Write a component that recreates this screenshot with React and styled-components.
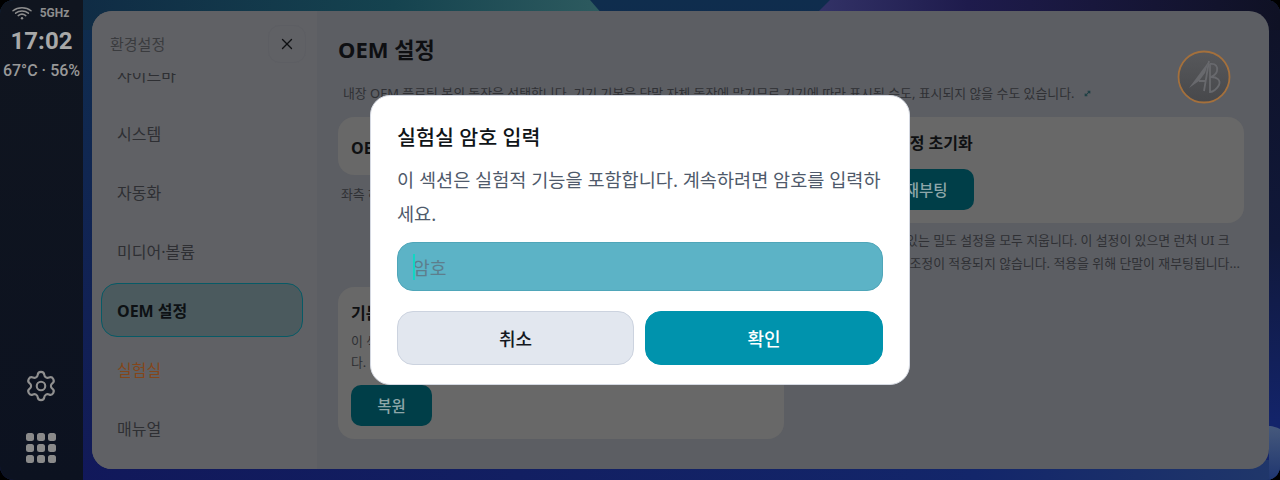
import React from "react";
import styled, { createGlobalStyle } from "styled-components";
import { Settings, X } from "lucide-react";

const Global = createGlobalStyle`
  html, body { margin: 0; padding: 0; background: #000; }
  * { box-sizing: border-box; }
  body { font-family: "Noto Sans", "Noto Sans CJK KR", sans-serif; overflow: hidden; }
`;

const Screen = styled.div`
  position: relative;
  width: 1280px;
  height: 480px;
  display: flex;
  overflow: hidden;
  border-radius: 14px;
  background: #0d1830;
`;

const Wallpaper = styled.svg`
  position: absolute;
  inset: 0;
`;

const Rail = styled.aside`
  position: relative;
  width: 83px;
  flex: none;
  display: flex;
  flex-direction: column;
  align-items: center;
  background: linear-gradient(180deg, #10151f 0%, #0c1220 100%);
  color: #a6a6a6;
`;

const StatusRow = styled.div`
  display: flex;
  align-items: center;
  gap: 8px;
  height: 14px;
  margin-top: 6px;
  margin-right: 2px;
  font: 700 12px/14px Roboto, sans-serif;
  color: #8d8d8d;
`;

const Clock = styled.div`
  font: 700 24px/28px Roboto, sans-serif;
  margin-top: 7px;
  color: #a8a8a8;
`;

const Temp = styled.div`
  font: 500 16px/18px Roboto, sans-serif;
  margin-top: 7px;
  white-space: nowrap;
  color: #989898;
`;

const RailBottom = styled.div`
  margin-top: auto;
  margin-bottom: 17px;
  margin-right: 1px;
  display: flex;
  flex-direction: column;
  align-items: center;
  gap: 30px;
  color: #8f8f8f;
`;

const Dots = styled.div`
  display: grid;
  grid-template-columns: repeat(3, 8px);
  grid-auto-rows: 8px;
  gap: 3px;
`;

const Dot = styled.span`
  border-radius: 2.5px;
  background: #8a8a8a;
`;

const Main = styled.main`
  position: relative;
  flex: 1;
  padding: 11px 11px 11px 9px;
  display: flex;
`;

const Panel = styled.div`
  flex: 1;
  display: flex;
  border-radius: 20px;
  overflow: hidden;
  background: #5c5e63;
`;

const Sidebar = styled.nav`
  width: 225px;
  flex: none;
  display: flex;
  flex-direction: column;
  background: #606165;
`;

const SideHead = styled.div`
  height: 62px;
  flex: none;
  display: flex;
  align-items: center;
  justify-content: space-between;
  padding: 3px 11px 0 18px;
  font-size: 15px;
  color: #3a3b3e;
`;

const CloseBtn = styled.button`
  width: 38px;
  height: 38px;
  display: flex;
  align-items: center;
  justify-content: center;
  border: 1px solid #5d5e63;
  border-radius: 12px;
  background: transparent;
  color: #0f1013;
  padding: 0;
`;

const SideScroll = styled.div`
  flex: 1;
  overflow: hidden;
  padding: 0 14px 0 9px;
`;

const SideList = styled.div`
  display: flex;
  flex-direction: column;
  gap: 5px;
  margin-top: -26px;
`;

const SideItem = styled.div`
  height: 54px;
  flex: none;
  display: flex;
  align-items: center;
  padding: 0 15px;
  font-size: 16px;
  font-weight: ${(p) => (p.$active ? 700 : 400)};
  color: ${(p) => (p.$active ? "#0d1114" : p.$warn ? "#84461a" : "#2e2f33")};
  border-radius: 16px;
  border: 1px solid ${(p) => (p.$active ? "#075a66" : "transparent")};
  background: ${(p) => (p.$active ? "#4b5a5e" : "transparent")};
`;

const Content = styled.section`
  flex: 1;
  min-width: 0;
  padding: 0 25px 0 21px;
  display: flex;
  flex-direction: column;
`;

const HeadRow = styled.div`
  position: relative;
  height: 106px;
  flex: none;
`;

const PageTitle = styled.h1`
  margin: 0;
  padding-top: 23px;
  font-size: 22px;
  line-height: 30px;
  font-weight: 700;
  color: #0e0f12;
`;

const PageDesc = styled.p`
  margin: 0;
  padding: 19px 0 0 5px;
  font-size: 12.9px;
  line-height: 20px;
  color: #2f3034;
  white-space: nowrap;
  display: flex;
  align-items: center;
  gap: 9px;
`;

const Logo = styled.svg`
  position: absolute;
  top: 39px;
  right: 13px;
`;

const Columns = styled.div`
  display: grid;
  grid-template-columns: 446px 443px;
  column-gap: 17px;
  align-items: start;
`;

const Column = styled.div`
  display: flex;
  flex-direction: column;
`;

const Card = styled.div`
  border-radius: 16px;
  background: #686868;
  padding: ${(p) => p.$pad || "13px"};
  height: ${(p) => p.$h}px;
`;

const CardTitle = styled.h2`
  margin: 0;
  font-size: 16px;
  line-height: 26px;
  font-weight: 700;
  color: #0f1012;
  white-space: nowrap;
`;

const CardText = styled.p`
  margin: ${(p) => p.$m || "0"};
  font-size: 12.9px;
  line-height: ${(p) => p.$lh || 23}px;
  color: #2f3034;
  white-space: nowrap;
`;

const Spacer = styled.div`
  height: ${(p) => p.$h}px;
`;

const SolidBtn = styled.div`
  display: inline-flex;
  align-items: center;
  justify-content: center;
  height: 41px;
  width: ${(p) => p.$w}px;
  margin-top: ${(p) => p.$mt || 0}px;
  border-radius: 10px;
  background: #003e48;
  color: #8ea6a9;
  font-size: 15.5px;
  font-weight: 500;
`;

const Backdrop = styled.div`
  position: absolute;
  inset: 0;
  display: flex;
  align-items: flex-start;
  justify-content: center;
  padding-top: 95px;
`;

const Dialog = styled.div`
  width: 540px;
  height: 290px;
  background: #fff;
  border-radius: 20px;
  border: 1px solid #d5d9e2;
  padding: 26px 26px 19px;
  display: flex;
  flex-direction: column;
`;

const DialogTitle = styled.h3`
  margin: 0;
  font-size: 20.6px;
  line-height: 30px;
  font-weight: 500;
  color: #101418;
`;

const DialogText = styled.p`
  margin: 11px 0 0;
  font-size: 18.6px;
  line-height: 34px;
  color: #4f5a6b;
`;

const Field = styled.div`
  position: relative;
  height: 49px;
  margin-top: 11px;
  display: flex;
  align-items: center;
  padding: 0 15px;
  border-radius: 16px;
  border: 1px solid #4fa6b9;
  background: #5cb3c6;
  font-size: 18.2px;
  color: #5d7e8d;
`;

const Caret = styled.span`
  position: absolute;
  left: 15px;
  top: 11px;
  width: 2px;
  height: 26px;
  background: #11d6c4;
`;

const Actions = styled.div`
  display: grid;
  grid-template-columns: 237px 238px;
  gap: 11px;
  margin-top: 20px;
`;

const ActionBtn = styled.div`
  height: 54px;
  display: flex;
  align-items: center;
  justify-content: center;
  border-radius: 16px;
  font-size: 18px;
  font-weight: 500;
  color: ${(p) => (p.$primary ? "#ffffff" : "#14181f")};
  background: ${(p) => (p.$primary ? "#0093ad" : "#e2e7ef")};
  border: 1px solid ${(p) => (p.$primary ? "#0093ad" : "#ccd3df")};
`;

const WifiIcon = () => (
  <svg width="20" height="14" viewBox="0 0 20 14" fill="none" stroke="#8d8d8d" strokeWidth="1.5" strokeLinecap="round">
    <path d="M1 4.8C6 .6 14 .6 19 4.8" />
    <path d="M3.6 7.2C7.3 4.2 12.7 4.2 16.4 7.2" />
    <path d="M6.2 9.6C8.4 7.9 11.6 7.9 13.8 9.6" />
    <circle cx="10" cy="12.2" r="1.2" fill="#8d8d8d" stroke="none" />
  </svg>
);

const LinkGlyph = () => (
  <svg width="7" height="7" viewBox="0 0 9 9" fill="none" stroke="#1d3f44" strokeWidth="1.3">
    <path d="M1.5 7.5L7.5 1.5M4.6 1.5h2.9v2.9M1.5 4.6v2.9h2.9" />
  </svg>
);

const App = () => (
  <>
    <Global />
    <Screen>
      <Wallpaper width="1280" height="480" viewBox="0 0 1280 480">
        <defs>
          <linearGradient id="base" x1="0" y1="0" x2="0" y2="1">
            <stop offset="0" stopColor="#0f2d4d" />
            <stop offset="1" stopColor="#121a58" />
          </linearGradient>
          <linearGradient id="teal" x1="0" y1="0" x2="1" y2="0">
            <stop offset="0" stopColor="#0f2a44" />
            <stop offset="0.6" stopColor="#15434f" />
            <stop offset="1" stopColor="#2f5c60" />
          </linearGradient>
          <linearGradient id="purple" x1="0" y1="0" x2="1" y2="0">
            <stop offset="0" stopColor="#35356a" />
            <stop offset="0.35" stopColor="#1e1b4c" />
            <stop offset="1" stopColor="#0f1124" />
          </linearGradient>
          <linearGradient id="right" x1="0" y1="0" x2="0" y2="1">
            <stop offset="0" stopColor="#0f1226" />
            <stop offset="0.5" stopColor="#10183a" />
            <stop offset="0.88" stopColor="#13246a" />
          </linearGradient>
          <linearGradient id="floor" x1="0" y1="0" x2="1" y2="0">
            <stop offset="0" stopColor="#11185a" />
            <stop offset="0.75" stopColor="#13266a" />
            <stop offset="1" stopColor="#20376a" />
          </linearGradient>
          <linearGradient id="bump" x1="0" y1="0" x2="0" y2="1">
            <stop offset="0" stopColor="#46597c" />
            <stop offset="1" stopColor="#1f3670" />
          </linearGradient>
          <linearGradient id="disc" x1="0" y1="0" x2="0" y2="1">
            <stop offset="0" stopColor="#57585b" />
            <stop offset="1" stopColor="#47484b" />
          </linearGradient>
        </defs>
        <rect width="1280" height="480" fill="url(#base)" />
        <path d="M1100 0H1280V480H1100Z" fill="url(#right)" />
        <path d="M60 0H590L616 30H60Z" fill="url(#teal)" />
        <path d="M800 30L830 0H1280V30Z" fill="url(#purple)" />
        <path d="M60 460H1280V480H60Z" fill="url(#floor)" />
        <path d="M1269 426C1272 426 1276 427 1280 429V480H1269Z" fill="url(#bump)" />
      </Wallpaper>
      <Rail>
        <StatusRow>
          <WifiIcon />
          <span>5GHz</span>
        </StatusRow>
        <Clock>17:02</Clock>
        <Temp>67°C · 56%</Temp>
        <RailBottom>
          <Settings size={34} strokeWidth={1.5} />
          <Dots>
            {Array.from({ length: 9 }).map((_, i) => (
              <Dot key={i} />
            ))}
          </Dots>
        </RailBottom>
      </Rail>
      <Main>
        <Panel>
          <Sidebar>
            <SideHead>
              <span>환경설정</span>
              <CloseBtn>
                <X size={18} strokeWidth={1.8} />
              </CloseBtn>
            </SideHead>
            <SideScroll>
              <SideList>
                <SideItem>사이드바</SideItem>
                <SideItem>시스템</SideItem>
                <SideItem>자동화</SideItem>
                <SideItem>미디어·볼륨</SideItem>
                <SideItem $active>OEM 설정</SideItem>
                <SideItem $warn>실험실</SideItem>
                <SideItem>매뉴얼</SideItem>
              </SideList>
            </SideScroll>
          </Sidebar>
          <Content>
            <HeadRow>
              <PageTitle>OEM 설정</PageTitle>
              <PageDesc>
                내장 OEM 플로팅 봇의 동작을 선택합니다. 기기 기본을 단말 자체 동작에 맡기므로 기기에 따라 표시될 수도, 표시되지 않을 수도 있습니다.
                <LinkGlyph />
              </PageDesc>
              <Logo width="54" height="54" viewBox="0 0 54 54" fill="none">
                <circle cx="27" cy="27" r="25.5" fill="url(#disc)" stroke="#a4703c" strokeWidth="1.8" />
                <path d="M32 11L12 38L22 31L28 23Z" fill="#68696d" />
                <path d="M32 11L27 41M22 31H29" stroke="#68696d" strokeWidth="1.8" />
                <path d="M33 14C39 13 41 17 40 21C39 25 36 26 34 27C40 27 44 30 42 35C40 39 36 42 33 42L33 14" stroke="#68696d" strokeWidth="1.8" />
              </Logo>
            </HeadRow>
            <Columns>
              <Column>
                <Card $h={58} $pad="18px 13px">
                  <CardTitle>OEM 플로팅 봇</CardTitle>
                </Card>
                <CardText $m="8px 0 0 3px" $lh={22}>좌측 하단 플로팅 봇의 동작을 선택합니다.</CardText>
                <Spacer $h={82} />
                <Card $h={152}>
                  <CardTitle>기본값 복원</CardTitle>
                  <CardText $m="5px 0 0" $lh={21}>이 섹션의 설정을 기본값으로 복원합니다. 복원 후에는 되돌릴 수 없습니</CardText>
                  <CardText $lh={21}>다.</CardText>
                  <SolidBtn $w={81} $mt={12}>복원</SolidBtn>
                </Card>
              </Column>
              <Column>
                <Card $h={106} $pad="13px 12px">
                  <CardTitle>화면 밀도값 설정 초기화</CardTitle>
                  <SolidBtn $w={161} $mt={13}>초기화 및 재부팅</SolidBtn>
                </Card>
                <CardText $m="6px 0 0 12px">시스템 내에 남아 있는 밀도 설정을 모두 지웁니다. 이 설정이 있으면 런처 UI 크</CardText>
                <CardText $m="0 0 0 12px">기 및 화면 배율의 조정이 적용되지 않습니다. 적용을 위해 단말이 재부팅됩니다...</CardText>
              </Column>
            </Columns>
          </Content>
        </Panel>
      </Main>
      <Backdrop>
        <Dialog>
          <DialogTitle>실험실 암호 입력</DialogTitle>
          <DialogText>이 섹션은 실험적 기능을 포함합니다. 계속하려면 암호를 입력하세요.</DialogText>
          <Field>
            <Caret />
            암호
          </Field>
          <Actions>
            <ActionBtn>취소</ActionBtn>
            <ActionBtn $primary>확인</ActionBtn>
          </Actions>
        </Dialog>
      </Backdrop>
    </Screen>
  </>
);

export default App;
